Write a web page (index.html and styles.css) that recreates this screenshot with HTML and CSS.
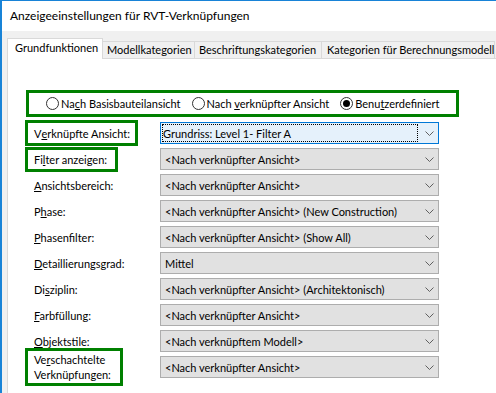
FILE: index.html
```html
<!DOCTYPE html>
<html lang="de">
<head>
<meta charset="utf-8">
<title>Anzeigeeinstellungen für RVT-Verknüpfungen</title>
<link rel="stylesheet" href="styles.css">
</head>
<body>
<div class="window">
  <div class="titlebar">Anzeigeeinstellungen für RVT-Verknüpfungen</div>
  <div class="dialog">
    <div class="tabs">
      <div class="tab active tab-basic">Grundfunktionen</div>
      <div class="tab tab-model">Modellkategorien</div>
      <div class="tab tab-annot">Beschriftungskategorien</div>
      <div class="tab tab-analytic">Kategorien für Berechnungsmodell</div>
    </div>
    <div class="panel">
      <div class="radio-group">
        <label class="radio"><span class="circle"></span><span class="rtext">Na<u>c</u>h Basisbauteilansicht</span></label>
        <label class="radio"><span class="circle"></span><span class="rtext">Nach <u>v</u>erknüpfter Ansicht</span></label>
        <label class="radio"><span class="circle checked"></span><span class="rtext">Benu<u>t</u>zerdefiniert</span></label>
      </div>
      <div class="form">
        <div class="row">
          <div class="cell"><span class="label hl hl-view">V<u>e</u>rknüpfte Ansicht:</span></div>
          <div class="select focused"><span class="focus-rect">Grundriss: Level 1- Filter A</span><svg class="chev" width="9" height="5" viewBox="0 0 9 5"><path d="M0.5 0.5 L4.5 4.5 L8.5 0.5" fill="none" stroke="#606060"/></svg></div>
        </div>
        <div class="row">
          <div class="cell"><span class="label hl hl-filter">Fi<u>l</u>ter anzeigen:</span></div>
          <div class="select"><span class="value">&lt;Nach verknüpfter Ansicht&gt;</span><svg class="chev" width="9" height="5" viewBox="0 0 9 5"><path d="M0.5 0.5 L4.5 4.5 L8.5 0.5" fill="none" stroke="#606060"/></svg></div>
        </div>
        <div class="row">
          <div class="cell"><span class="label"><u>A</u>nsichtsbereich:</span></div>
          <div class="select"><span class="value">&lt;Nach verknüpfter Ansicht&gt;</span><svg class="chev" width="9" height="5" viewBox="0 0 9 5"><path d="M0.5 0.5 L4.5 4.5 L8.5 0.5" fill="none" stroke="#606060"/></svg></div>
        </div>
        <div class="row">
          <div class="cell"><span class="label">P<u>h</u>ase:</span></div>
          <div class="select"><span class="value">&lt;Nach verknüpfter Ansicht&gt; (New Construction)</span><svg class="chev" width="9" height="5" viewBox="0 0 9 5"><path d="M0.5 0.5 L4.5 4.5 L8.5 0.5" fill="none" stroke="#606060"/></svg></div>
        </div>
        <div class="row">
          <div class="cell"><span class="label"><u>P</u>hasenfilter:</span></div>
          <div class="select"><span class="value">&lt;Nach verknüpfter Ansicht&gt; (Show All)</span><svg class="chev" width="9" height="5" viewBox="0 0 9 5"><path d="M0.5 0.5 L4.5 4.5 L8.5 0.5" fill="none" stroke="#606060"/></svg></div>
        </div>
        <div class="row">
          <div class="cell"><span class="label"><u>D</u>etaillierungsgrad:</span></div>
          <div class="select"><span class="value">Mittel</span><svg class="chev" width="9" height="5" viewBox="0 0 9 5"><path d="M0.5 0.5 L4.5 4.5 L8.5 0.5" fill="none" stroke="#606060"/></svg></div>
        </div>
        <div class="row">
          <div class="cell"><span class="label">Di<u>s</u>ziplin:</span></div>
          <div class="select"><span class="value">&lt;Nach verknüpfter Ansicht&gt; (Architektonisch)</span><svg class="chev" width="9" height="5" viewBox="0 0 9 5"><path d="M0.5 0.5 L4.5 4.5 L8.5 0.5" fill="none" stroke="#606060"/></svg></div>
        </div>
        <div class="row">
          <div class="cell"><span class="label"><u>F</u>arbfüllung:</span></div>
          <div class="select"><span class="value">&lt;Nach verknüpfter Ansicht&gt;</span><svg class="chev" width="9" height="5" viewBox="0 0 9 5"><path d="M0.5 0.5 L4.5 4.5 L8.5 0.5" fill="none" stroke="#606060"/></svg></div>
        </div>
        <div class="row">
          <div class="cell"><span class="label"><u>O</u>bjektstile:</span></div>
          <div class="select"><span class="value">&lt;Nach verknüpftem Modell&gt;</span><svg class="chev" width="9" height="5" viewBox="0 0 9 5"><path d="M0.5 0.5 L4.5 4.5 L8.5 0.5" fill="none" stroke="#606060"/></svg></div>
        </div>
        <div class="row">
          <div class="cell"><span class="label hl hl-nested">Ve<u>r</u>schachtelte<br>Verknüpfungen:</span></div>
          <div class="select"><span class="value">&lt;Nach verknüpfter Ansicht&gt;</span><svg class="chev" width="9" height="5" viewBox="0 0 9 5"><path d="M0.5 0.5 L4.5 4.5 L8.5 0.5" fill="none" stroke="#606060"/></svg></div>
        </div>
      </div>
    </div>
  </div>
</div>
</body>
</html>
```

FILE: styles.css
```css
* { box-sizing: border-box; }
html, body {
  margin: 0;
  padding: 0;
  width: 496px;
  height: 393px;
  overflow: hidden;
  background: #ffffff;
}
body {
  font-family: "Lato", "Noto Sans", sans-serif;
  font-size: 11px;
  color: #000000;
}
u { text-decoration: underline; text-underline-offset: 1px; }

.window {
  height: 393px;
  border-top: 1px solid #1883d7;
  border-left: 2px solid #1883d7;
  display: flex;
  flex-direction: column;
}
.titlebar {
  height: 30px;
  line-height: 30px;
  padding-left: 8px;
  background: #ffffff;
  font-size: 12px;
  white-space: nowrap;
}
.dialog {
  flex: 1;
  background: #f0f0f0;
  padding: 7px 0 0 5px;
  display: flex;
  flex-direction: column;
}
.tabs {
  display: flex;
  align-items: flex-end;
  height: 20px;
  position: relative;
  z-index: 1;
}
.tab {
  flex: none;
  height: 17px;
  line-height: 16px;
  padding: 0 0 0 4px;
  border: 1px solid #d9d9d9;
  border-bottom: none;
  margin-left: -1px;
  background: #f0f0f0;
  white-space: nowrap;
  overflow: hidden;
}
.tab.active {
  height: 21px;
  margin-bottom: -1px;
  margin-left: 0;
  line-height: 18px;
  padding-left: 7px;
  background: #ffffff;
}
.tab-basic { width: 96px; }
.tab-model { width: 93px; }
.tab-annot { width: 128px; }
.tab-analytic { width: 174px; padding-left: 5px; }

.panel {
  flex: 1;
  background: #ffffff;
  border-left: 1px solid #d9d9d9;
  border-top: 1px solid #d9d9d9;
  padding: 31px 0 0 0;
}

.radio-group {
  margin-left: 18px;
  width: 433px;
  height: 27px;
  border: 3px solid #008000;
  display: flex;
  align-items: center;
  padding-left: 17px;
}
.radio {
  display: flex;
  align-items: center;
  margin-right: 11px;
  white-space: nowrap;
}
.circle {
  width: 13px;
  height: 13px;
  border: 1px solid #333333;
  border-radius: 50%;
  background: #ffffff;
  margin-right: 2px;
  display: flex;
  align-items: center;
  justify-content: center;
}
.circle.checked::after {
  content: "";
  width: 7px;
  height: 7px;
  border-radius: 50%;
  background: #000000;
}

.form {
  margin-top: 3px;
  padding-left: 17px;
  display: flex;
  flex-direction: column;
}
.row {
  height: 26px;
  display: flex;
  align-items: center;
}
.cell {
  width: 135px;
  flex: none;
  display: flex;
  align-items: center;
}
.label {
  padding-left: 9px;
  line-height: 15px;
  white-space: nowrap;
}
.hl {
  border: 3px solid #008000;
  padding-left: 6px;
  display: flex;
  align-items: center;
  height: 26px;
}
.hl-view { width: 113px; }
.hl-filter { width: 93px; height: 25px; }
.hl-nested { width: 98px; height: 38px; display: block; padding-top: 1px; }

.select {
  width: 279px;
  flex: none;
  height: 22px;
  border: 1px solid #adadad;
  background: #e1e1e1;
  display: flex;
  align-items: center;
  padding-left: 4px;
  padding-right: 4px;
  white-space: nowrap;
}
.select .value { flex: 1; }
.select.focused {
  background: #e5f1fb;
  border-color: #0078d7;
  padding: 1px 4px 1px 1px;
  align-items: stretch;
}
.focus-rect {
  flex: 1;
  border: 1px dotted #000000;
  display: flex;
  align-items: center;
  padding-left: 0px;
  margin-right: 7px;
}
.chev { flex: none; align-self: center; }
```
